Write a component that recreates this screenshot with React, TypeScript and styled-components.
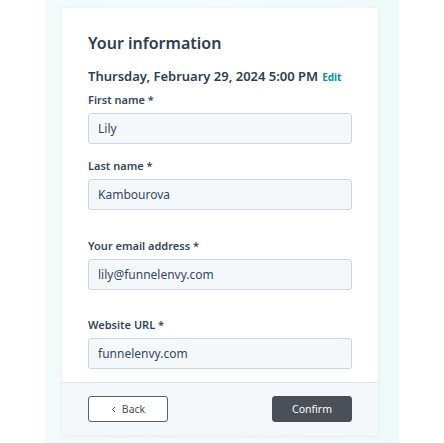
import React from "react"
import styled, { createGlobalStyle } from "styled-components"

const GlobalStyle = createGlobalStyle`
  html, body {
    margin: 0;
    padding: 0;
    background: #ffffff;
  }
  body {
    font-family: "Noto Sans", "Open Sans", sans-serif;
    color: #33475b;
  }
`

const Backdrop = styled.div`
  margin-left: 45px;
  width: 354px;
  min-height: 443px;
  box-sizing: border-box;
  padding: 8px 21px 7px 17px;
  background: linear-gradient(90deg, #f2fafa 0%, #f5fbfb 50%, #eefaf8 100%);
`

const Card = styled.div`
  width: 316px;
  background: #ffffff;
  box-shadow: 0 1px 4px rgba(45, 62, 80, 0.08);
  display: flex;
  flex-direction: column;
`

const Body = styled.div`
  padding: 25px 26px 13px;
  display: flex;
  flex-direction: column;
`

const Title = styled.h2`
  margin: 0;
  font-size: 16px;
  line-height: 20px;
  font-weight: 600;
  color: #2d3e50;
`

const DateLine = styled.div`
  margin-top: 15px;
  font-size: 13px;
  line-height: 16px;
  font-weight: 600;
  color: #2d3e50;
  white-space: nowrap;
`

const EditLink = styled.a`
  margin-left: 4px;
  font-size: 10px;
  font-weight: 700;
  color: #0b8e9f;
  text-decoration: none;
`

const Field = styled.div<{ $gap: number }>`
  margin-top: ${(p) => p.$gap}px;
  display: flex;
  flex-direction: column;
`

const Label = styled.label`
  font-size: 11px;
  line-height: 14px;
  font-weight: 600;
  color: #33475b;
  margin-bottom: 6px;
`

const Input = styled.div`
  height: 31px;
  box-sizing: border-box;
  border: 1px solid #cbd6e2;
  border-radius: 3px;
  background: #f5f8fa;
  padding: 0 9px;
  display: flex;
  align-items: center;
  font-size: 12px;
  color: #33475b;
`

const Footer = styled.div`
  border-top: 1px solid #dfe3eb;
  background: #f5f8fa;
  padding: 13px 26px 13px;
  display: flex;
  justify-content: space-between;
`

const Button = styled.button<{ $primary?: boolean }>`
  width: 80px;
  height: 26px;
  box-sizing: border-box;
  border-radius: 3px;
  border: 1px solid ${(p) => (p.$primary ? "#4a4f58" : "#5b6067")};
  background: ${(p) => (p.$primary ? "#4a4f58" : "#ffffff")};
  color: ${(p) => (p.$primary ? "#ffffff" : "#4a4f58")};
  font-family: inherit;
  font-size: 10.5px;
  display: flex;
  align-items: center;
  justify-content: center;
  gap: 6px;
  padding: 0;
`

const Chevron = () => (
  <svg width="5" height="7" viewBox="0 0 5 7" fill="none">
    <path d="M4 1L1.5 3.5L4 6" stroke="#4a4f58" strokeWidth="1" />
  </svg>
)

const fields = [
  { label: "First name *", value: "Lily", gap: 8 },
  { label: "Last name *", value: "Kambourova", gap: 15 },
  { label: "Your email address *", value: "lily@funnelenvy.com", gap: 29 },
  { label: "Website URL *", value: "funnelenvy.com", gap: 28 },
]

export default function App() {
  return (
    <>
      <GlobalStyle />
      <Backdrop>
        <Card>
          <Body>
            <Title>Your information</Title>
            <DateLine>
              Thursday, February 29, 2024 5:00 PM
              <EditLink href="#">Edit</EditLink>
            </DateLine>
            {fields.map((f) => (
              <Field key={f.label} $gap={f.gap}>
                <Label>{f.label}</Label>
                <Input>{f.value}</Input>
              </Field>
            ))}
          </Body>
          <Footer>
            <Button>
              <Chevron />
              Back
            </Button>
            <Button $primary>Confirm</Button>
          </Footer>
        </Card>
      </Backdrop>
    </>
  )
}
